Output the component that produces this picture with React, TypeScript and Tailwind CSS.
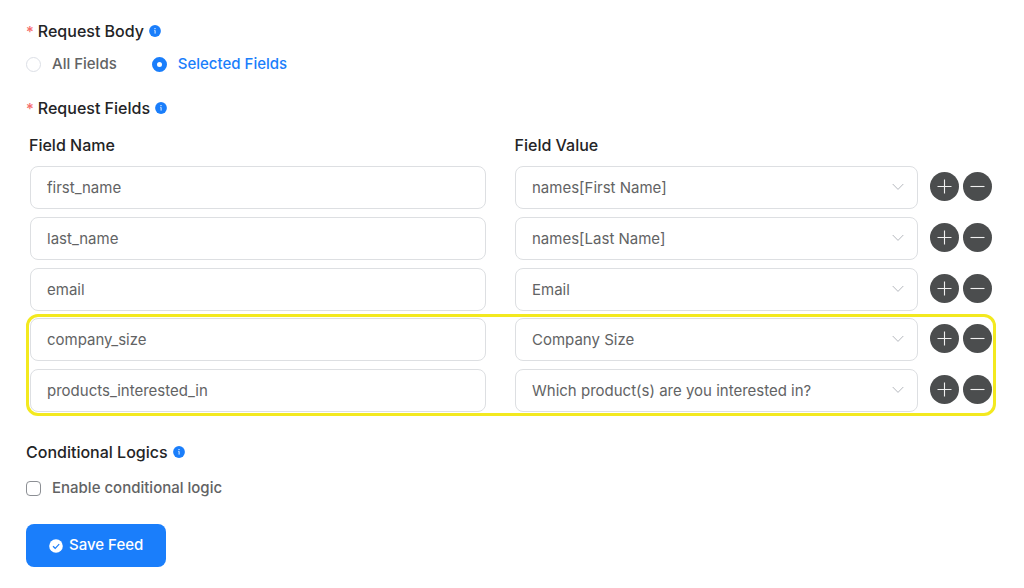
import { useState } from 'react'

type FieldRow = {
  id: number
  name: string
  value: string
}

const initialRows: FieldRow[] = [
  { id: 1, name: 'first_name', value: 'names[First Name]' },
  { id: 2, name: 'last_name', value: 'names[Last Name]' },
  { id: 3, name: 'email', value: 'Email' },
  { id: 4, name: 'company_size', value: 'Company Size' },
  { id: 5, name: 'products_interested_in', value: 'Which product(s) are you interested in?' },
]

const valueOptions = initialRows.map((row) => row.value)
const highlighted = [4, 5]

const controlClass = 'h-[43px] w-full rounded-lg border border-[#dddfe2] bg-white px-4 text-[15px] text-[#626364] outline-none focus:border-[#1a7efb]'
const roundClass = 'flex size-[29px] shrink-0 items-center justify-center rounded-full bg-[#4b4d4e] text-[#f0f0f0] hover:bg-[#333]'
const radioClass = 'size-[15px] shrink-0 appearance-none rounded-full border border-[#dcdfe6] bg-white checked:border-[5px] checked:border-[#1a7efb]'

function InfoIcon() {
  return (
    <svg viewBox="0 0 12 12" className="size-3 shrink-0" aria-hidden="true">
      <circle cx="6" cy="6" r="5.9" fill="#1a7efb" />
      <circle cx="6" cy="3.6" r="0.7" fill="#fff" />
      <path d="M5.4 5.4H6.1V8.6" fill="none" stroke="#fff" strokeWidth="0.9" />
    </svg>
  )
}

function SectionTitle({ text, required }: { text: string; required?: boolean }) {
  return (
    <h2 className="flex h-6 items-center gap-[5px] text-base font-medium text-[#232426]">
      <span>
        {required ? <span className="mr-1 text-[15px] text-[#f56c6c]">*</span> : null}
        {text}
      </span>
      <InfoIcon />
    </h2>
  )
}

type RowProps = {
  row: FieldRow
  onChange: (row: FieldRow) => void
  onAdd: () => void
  onRemove: () => void
}

function MappingRow({ row, onChange, onAdd, onRemove }: RowProps) {
  return (
    <div className="flex items-center">
      <div className="mr-[29px] min-w-0 flex-[456]">
        <input
          aria-label="Field Name"
          className={controlClass}
          value={row.name}
          onChange={(event) => onChange({ ...row, name: event.target.value })}
        />
      </div>
      <div className="relative mr-3 min-w-0 flex-[403]">
        <select
          aria-label="Field Value"
          className={`${controlClass} appearance-none pt-0.5 pr-10`}
          value={row.value}
          onChange={(event) => onChange({ ...row, value: event.target.value })}
        >
          {valueOptions.map((option) => (
            <option key={option}>{option}</option>
          ))}
        </select>
        <svg viewBox="0 0 12 8" className="pointer-events-none absolute top-[17px] right-[14px] h-2 w-3" fill="none" stroke="#b4b7bd" aria-hidden="true">
          <path d="M0.7 1L6 6.4L11.3 1" />
        </svg>
      </div>
      <div className="flex gap-1 pb-[2px]">
        <button type="button" aria-label="Add row" className={roundClass} onClick={onAdd}>
          <svg viewBox="0 0 15 15" className="size-[15px]" stroke="currentColor" strokeWidth="1.1" aria-hidden="true">
            <path d="M0.5 7.5H14.5M7.5 0.5V14.5" />
          </svg>
        </button>
        <button type="button" aria-label="Remove row" className={roundClass} onClick={onRemove}>
          <svg viewBox="0 0 15 15" className="size-[15px]" stroke="currentColor" strokeWidth="1.1" aria-hidden="true">
            <path d="M0.5 7.5H14.5" />
          </svg>
        </button>
      </div>
    </div>
  )
}

export default function App() {
  const [scope, setScope] = useState('selected')
  const [rows, setRows] = useState(initialRows)
  const [conditional, setConditional] = useState(false)

  const renderRow = (row: FieldRow) => (
    <MappingRow
      key={row.id}
      row={row}
      onChange={(next) => setRows(rows.map((item) => (item.id === row.id ? next : item)))}
      onAdd={() => setRows([...rows, { id: Date.now(), name: '', value: valueOptions[0] }])}
      onRemove={() => setRows(rows.filter((item) => item.id !== row.id))}
    />
  )

  return (
    <main className="min-h-screen bg-white font-['Inter','Liberation_Sans',sans-serif] text-[15px] text-[#626364]">
      <form className="pt-[19px] pr-8 pb-5 pl-[26px]" onSubmit={(event) => event.preventDefault()}>
        <SectionTitle text="Request Body" required />
        <div className="mt-[9px] flex h-6 items-center gap-[35px] font-medium">
          <label className="flex items-center gap-[11px]">
            <input type="radio" name="scope" className={radioClass} checked={scope === 'all'} onChange={() => setScope('all')} />
            <span className={scope === 'all' ? 'text-[#1a7efb]' : ''}>All Fields</span>
          </label>
          <label className="flex items-center gap-[11px]">
            <input type="radio" name="scope" className={radioClass} checked={scope === 'selected'} onChange={() => setScope('selected')} />
            <span className={scope === 'selected' ? 'text-[#1a7efb]' : ''}>Selected Fields</span>
          </label>
        </div>

        <section className="mt-5">
          <SectionTitle text="Request Fields" required />
          <div className="mt-[13px] flex h-6 items-center pl-[3px] text-base font-medium text-[#232426]">
            <span className="mr-[29px] flex-[456]">Field Name</span>
            <span className="mr-3 flex-[403]">Field Value</span>
            <span className="w-[62px]" />
          </div>
          <div className="mt-[9px] flex flex-col gap-2 pl-1">
            {rows.filter((row) => !highlighted.includes(row.id)).map(renderRow)}
          </div>
          <div className="mt-[3px] -mr-1 flex flex-col gap-2 rounded-xl border-3 border-[#f3e91f] p-px">
            {rows.filter((row) => highlighted.includes(row.id)).map(renderRow)}
          </div>
        </section>

        <section className="mt-6">
          <SectionTitle text="Conditional Logics" />
          <label className="mt-3 flex h-6 items-center gap-[11px] font-medium">
            <input
              type="checkbox"
              className="size-[15px] shrink-0 appearance-none rounded-sm border border-[#8c8f94] bg-white checked:border-[#1a7efb] checked:bg-[#1a7efb]"
              checked={conditional}
              onChange={(event) => setConditional(event.target.checked)}
            />
            Enable conditional logic
          </label>
        </section>

        <button type="submit" className="mt-6 flex h-[43px] items-center gap-1.5 rounded-lg bg-[#1a7efb] px-[23px] font-medium text-white hover:bg-[#4898fc]">
          <svg viewBox="0 0 14 14" className="size-[14px]" aria-hidden="true">
            <circle cx="7" cy="7" r="6.8" fill="#fff" />
            <path d="M4 7.2L6.2 9.3L10.2 5.2" fill="none" stroke="#1a7efb" strokeWidth="1.2" />
          </svg>
          Save Feed
        </button>
      </form>
    </main>
  )
}
